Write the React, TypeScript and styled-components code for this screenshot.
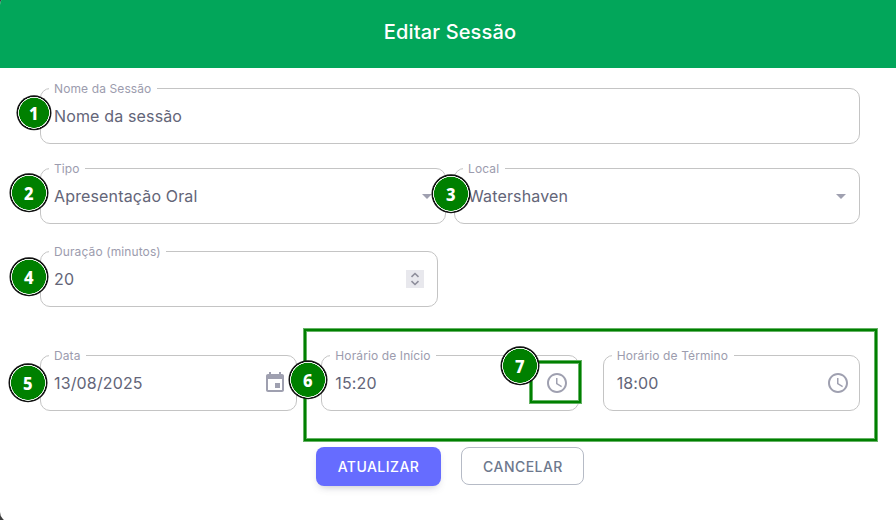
import React from "react";
import styled, { createGlobalStyle } from "styled-components";

const GlobalStyle = createGlobalStyle`
  *, *::before, *::after { box-sizing: border-box; }
  body {
    margin: 0;
    overflow: hidden;
    font-family: Inter, "Liberation Sans", sans-serif;
    letter-spacing: 0.15px;
  }
`;

const Backdrop = styled.div`
  height: 520px;
  overflow: hidden;
  background: #3d3d3d;
`;

const Dialog = styled.main`
  position: relative;
  height: 527px;
  margin-top: -5px;
  overflow: hidden;
  background: #fff;
  border-radius: 10px 0 0 10px;
`;

const Header = styled.header`
  display: flex;
  align-items: center;
  justify-content: center;
  height: 73px;
  padding: 5px 0 1px 4px;
  background: #02a65a;
`;

const Title = styled.h1`
  margin: 0;
  padding-bottom: 3px;
  font-size: 20px;
  line-height: 32px;
  font-weight: 500;
  color: #fff;
`;

const Form = styled.div`
  display: flex;
  flex-direction: column;
  padding: 20px 36px 0 40px;
`;

const Row = styled.div<{ $columns: string; $gap?: number; $top?: number }>`
  display: grid;
  grid-template-columns: ${(p) => p.$columns};
  column-gap: ${(p) => p.$gap ?? 0}px;
  margin-top: ${(p) => p.$top ?? 0}px;
`;

const FieldBox = styled.div`
  position: relative;
  display: flex;
  align-items: center;
  justify-content: space-between;
  height: 56px;
  padding: 0 8px 0 13px;
  border: 1px solid #c4c4c4;
  border-radius: 10px;
`;

const Label = styled.span`
  position: absolute;
  top: -9px;
  left: 8px;
  padding: 0 5.5px 0 5px;
  background: #fff;
  color: #9c9cae;
  font-size: 12px;
  line-height: 18px;
  letter-spacing: 0.11px;
  white-space: nowrap;
`;

const Value = styled.span`
  font-size: 16px;
  line-height: 23px;
  color: #636578;
  white-space: nowrap;
`;

const Icon = styled.svg<{ $shift?: number }>`
  width: 24px;
  height: 24px;
  flex: none;
  margin-right: ${(p) => p.$shift ?? 0}px;
  fill: #9fa0b0;
`;

const Spinner = styled.span`
  display: grid;
  place-items: center;
  width: 18px;
  height: 18px;
  margin-right: 5px;
  background: #e8e8ed;
`;

const Actions = styled.div`
  display: flex;
  gap: 20px;
  margin-top: 36px;
  padding-left: 276px;
`;

const Button = styled.button<{ $primary?: boolean }>`
  width: ${(p) => (p.$primary ? 125 : 123)}px;
  height: ${(p) => (p.$primary ? 39 : 38)}px;
  padding: ${(p) => (p.$primary ? "0" : "1px 0 0 1px")};
  border: ${(p) => (p.$primary ? "none" : "1px solid #b6bbc6")};
  border-radius: 8px;
  background: ${(p) => (p.$primary ? "#666cff" : "#fff")};
  box-shadow: ${(p) => (p.$primary ? "0 4px 8px -4px rgba(76, 78, 100, 0.42)" : "none")};
  color: ${(p) => (p.$primary ? "#fff" : "#6d788d")};
  font: 500 14px/24px Inter, sans-serif;
  letter-spacing: 0.46px;
`;

const Highlight = styled.div<{ $x: number; $y: number; $w: number; $h: number }>`
  position: absolute;
  left: ${(p) => p.$x}px;
  top: ${(p) => p.$y + 5}px;
  width: ${(p) => p.$w}px;
  height: ${(p) => p.$h}px;
  border: 2px solid #008000;
  box-shadow: 0 0 0 1px #66b366, inset 0 0 0 1px #66b366;
`;

const Marker = styled.div<{ $x: number; $y: number; $size: number }>`
  position: absolute;
  left: ${(p) => p.$x}px;
  top: ${(p) => p.$y + 5}px;
  transform: translate(-50%, calc(-50% - 0.2px));
  display: grid;
  place-items: center;
  width: ${(p) => p.$size}px;
  height: ${(p) => p.$size}px;
  border-radius: 50%;
  background: radial-gradient(
    closest-side,
    #008000 calc(100% - 2.8px),
    #e5f2e5 calc(100% - 2.4px),
    #e5f2e5 calc(100% - 1.8px),
    #111 calc(100% - 1.4px)
  );
  color: #fff;
  font: 800 18px/24px "Noto Sans", "Open Sans", sans-serif;
  letter-spacing: 0;
`;

const Digit = styled.span`
  transform: translateY(-0.5px) scaleX(0.92);
`;

const Clock = () => (
  <Icon viewBox="0 0 24 24" $shift={1}>
    <path d="M11.99 2C6.47 2 2 6.48 2 12s4.47 10 9.99 10C17.52 22 22 17.52 22 12S17.52 2 11.99 2zM12 20c-4.42 0-8-3.58-8-8s3.58-8 8-8 8 3.58 8 8-3.58 8-8 8z" />
    <path d="M12.5 7H11v6l5.25 3.15.75-1.23-4.5-2.67z" />
  </Icon>
);

const Calendar = () => (
  <Icon viewBox="0 0 24 24" $shift={1}>
    <path d="M17 12h-5v5h5v-5zM16 1v2H8V1H6v2H5c-1.11 0-1.99.9-1.99 2L3 19c0 1.1.89 2 2 2h14c1.1 0 2-.9 2-2V5c0-1.1-.9-2-2-2h-1V1h-2zm3 18H5V8h14v11z" />
  </Icon>
);

const Arrow = () => (
  <Icon viewBox="0 0 24 24" $shift={-2}>
    <path d="M7 10l5 5 5-5z" />
  </Icon>
);

const NumberSpinner = () => (
  <Spinner>
    <svg width="10" height="14" viewBox="0 0 10 14" fill="none" stroke="#8e8e9b" strokeWidth="1.6">
      <path d="M1.5 4.8 5 1.5l3.5 3.3M1.5 9.2 5 12.5l3.5-3.3" />
    </svg>
  </Spinner>
);

function Field({ label, value, children }: { label: string; value: string; children?: React.ReactNode }) {
  return (
    <FieldBox>
      <Label>{label}</Label>
      <Value>{value}</Value>
      {children}
    </FieldBox>
  );
}

const markers = [
  { x: 34, y: 113, size: 35 },
  { x: 29, y: 193, size: 39 },
  { x: 451, y: 194, size: 39 },
  { x: 29, y: 277, size: 39 },
  { x: 28, y: 383, size: 39 },
  { x: 308, y: 380, size: 39 },
  { x: 520, y: 366, size: 39 },
];

export default function App() {
  return (
    <>
      <GlobalStyle />
      <Backdrop>
        <Dialog>
          <Header>
            <Title>Editar Sessão</Title>
          </Header>
          <Form>
            <Row $columns="820px">
              <Field label="Nome da Sessão" value="Nome da sessão" />
            </Row>
            <Row $columns="406px 406px" $gap={8} $top={24}>
              <Field label="Tipo" value="Apresentação Oral"><Arrow /></Field>
              <Field label="Local" value="Watershaven"><Arrow /></Field>
            </Row>
            <Row $columns="398px" $top={27}>
              <Field label="Duração (minutos)" value="20"><NumberSpinner /></Field>
            </Row>
            <Row $columns="257.33px 257.33px 257.33px" $gap={24} $top={48}>
              <Field label="Data" value="13/08/2025"><Calendar /></Field>
              <Field label="Horário de Início" value="15:20"><Clock /></Field>
              <Field label="Horário de Término" value="18:00"><Clock /></Field>
            </Row>
            <Actions>
              <Button $primary>ATUALIZAR</Button>
              <Button>CANCELAR</Button>
            </Actions>
          </Form>
          <Highlight $x={304} $y={329} $w={573} $h={112} />
          <Highlight $x={530} $y={361} $w={51} $h={42} />
          {markers.map((m, i) => (
            <Marker key={i} $x={m.x} $y={m.y} $size={m.size}>
              <Digit>{i + 1}</Digit>
            </Marker>
          ))}
        </Dialog>
      </Backdrop>
    </>
  );
}
